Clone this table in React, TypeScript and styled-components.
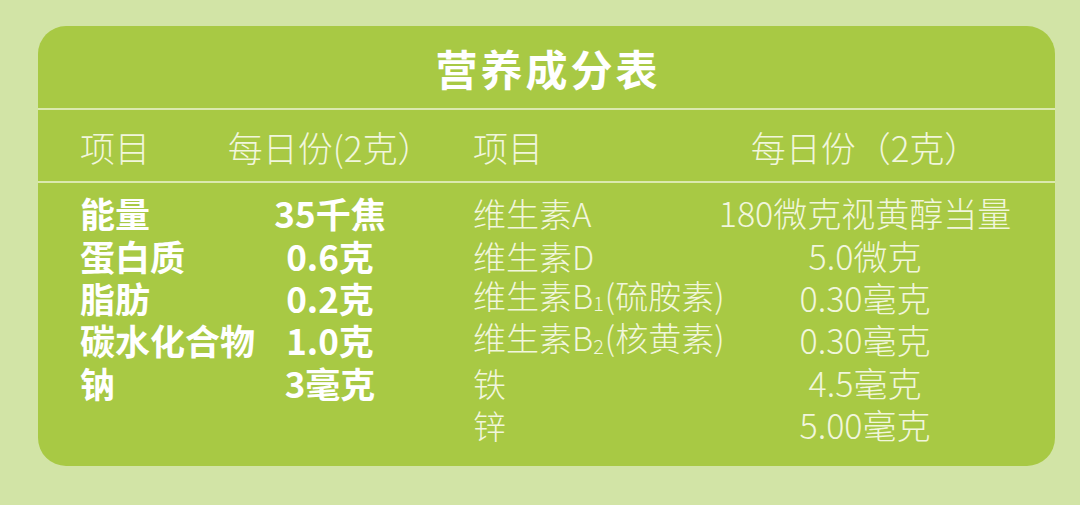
import React from 'react';
import styled, { createGlobalStyle } from 'styled-components';

const GlobalStyle = createGlobalStyle`
  html, body {
    margin: 0;
    padding: 0;
    background: #d2e4a6;
  }
  body {
    font-family: "Noto Sans CJK SC", "Noto Sans", sans-serif;
  }
`;

const Page = styled.div`
  width: 1080px;
  height: 505px;
  box-sizing: border-box;
  padding: 26px 25px 39px 38px;
  background: #d2e4a6;
`;

const Card = styled.section`
  height: 100%;
  border-radius: 28px;
  background: #a8c944;
  display: flex;
  flex-direction: column;
  overflow: hidden;
`;

const Title = styled.h1`
  margin: 0;
  height: 82px;
  display: flex;
  align-items: center;
  justify-content: center;
  padding-left: 3px;
  color: #ffffff;
  font-size: 42px;
  font-weight: 700;
  letter-spacing: 3px;
`;

const Rule = styled.hr`
  margin: 0;
  border: 0;
  height: 2px;
  background: #dbe9ae;
`;

const Grid = styled.div`
  display: grid;
  grid-template-columns: 170px 160px 305px 300px;
  padding-left: 42px;
  white-space: nowrap;
`;

const HeaderRow = styled(Grid)`
  height: 71px;
  align-items: center;
  padding-top: 3px;
  box-sizing: border-box;
  color: #f1f6dc;
  font-size: 35px;
  font-weight: 200;
`;

const Body = styled(Grid)`
  padding-top: 9px;
  grid-auto-rows: 42.4px;
  align-items: center;
`;

const Cell = styled.div<{ $center?: boolean; $indent?: boolean }>`
  display: flex;
  justify-content: ${(p) => (p.$center ? 'center' : 'flex-start')};
  align-items: baseline;
  padding-left: ${(p) => (p.$indent ? '63px' : '0')};
  line-height: 42px;
`;

const Strong = styled(Cell)`
  color: #ffffff;
  font-size: 35px;
  font-weight: 700;
`;

const Light = styled(Cell)<{ $size?: number }>`
  color: #f1f6dc;
  font-size: ${(p) => p.$size ?? 33}px;
  font-weight: 200;
`;

const Sub = styled.span`
  font-size: 0.6em;
  position: relative;
  top: 0.12em;
  margin-right: 1px;
`;

const basic: [string, string][] = [
  ['能量', '35千焦'],
  ['蛋白质', '0.6克'],
  ['脂肪', '0.2克'],
  ['碳水化合物', '1.0克'],
  ['钠', '3毫克'],
];

const vitamins: [React.ReactNode, string][] = [
  ['维生素A', '180微克视黄醇当量'],
  ['维生素D', '5.0微克'],
  [<span>维生素B<Sub>1</Sub>(硫胺素)</span>, '0.30毫克'],
  [<span>维生素B<Sub>2</Sub>(核黄素)</span>, '0.30毫克'],
  ['铁', '4.5毫克'],
  ['锌', '5.00毫克'],
];

export default function App() {
  return (
    <>
      <GlobalStyle />
      <Page>
        <Card>
          <Title>营养成分表</Title>
          <Rule />
          <HeaderRow>
            <Cell>项目</Cell>
            <Cell $center>每日份(2克）</Cell>
            <Cell $indent>项目</Cell>
            <Cell $center>每日份（2克）</Cell>
          </HeaderRow>
          <Rule />
          <Body>
            {vitamins.map(([name, amount], i) => (
              <React.Fragment key={i}>
                <Strong>{basic[i]?.[0] ?? ''}</Strong>
                <Strong $center>{basic[i]?.[1] ?? ''}</Strong>
                <Light $indent>{name}</Light>
                <Light $center $size={34}>{amount}</Light>
              </React.Fragment>
            ))}
          </Body>
        </Card>
      </Page>
    </>
  );
}
